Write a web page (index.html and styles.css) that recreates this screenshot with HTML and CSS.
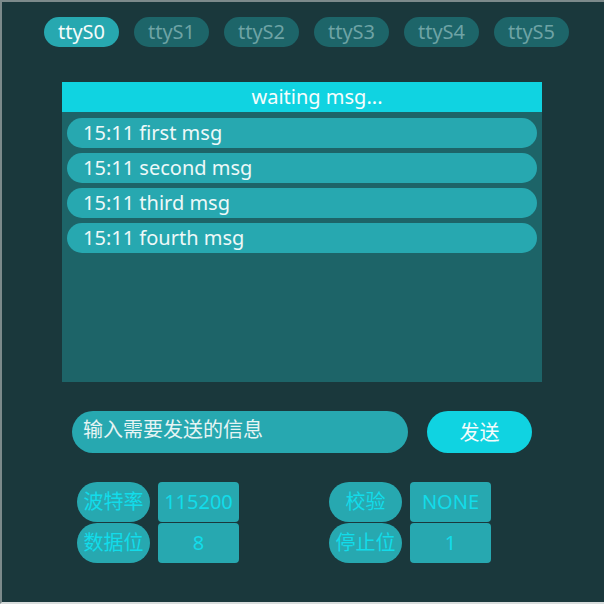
FILE: index.html
```html
<!DOCTYPE html>
<html lang="zh">
<head>
<meta charset="utf-8">
<title>Serial</title>
<link rel="stylesheet" href="styles.css">
</head>
<body>
<div class="screen">
  <div class="tabs">
    <div class="tab active">ttyS0</div>
    <div class="tab">ttyS1</div>
    <div class="tab">ttyS2</div>
    <div class="tab">ttyS3</div>
    <div class="tab">ttyS4</div>
    <div class="tab">ttyS5</div>
  </div>
  <div class="panel">
    <div class="panel-head">waiting msg...</div>
    <div class="msgs">
      <div class="msg">15:11 first msg</div>
      <div class="msg">15:11 second msg</div>
      <div class="msg">15:11 third msg</div>
      <div class="msg">15:11 fourth msg</div>
    </div>
  </div>
  <div class="send-row">
    <div class="input">输入需要发送的信息</div>
    <div class="send">发送</div>
  </div>
  <div class="settings">
    <div class="group">
      <div class="row"><div class="label">波特率</div><div class="value">115200</div></div>
      <div class="row"><div class="label">数据位</div><div class="value">8</div></div>
    </div>
    <div class="group">
      <div class="row"><div class="label">校验</div><div class="value">NONE</div></div>
      <div class="row"><div class="label">停止位</div><div class="value">1</div></div>
    </div>
  </div>
</div>
</body>
</html>
```
FILE: styles.css
```css
* { box-sizing: border-box; }
html, body { margin: 0; padding: 0; background: #ffffff; }
body {
  font-family: "Noto Sans", "Noto Sans CJK SC", sans-serif;
  font-size: 20px;
}
.screen {
  width: 604px;
  height: 604px;
  background: #1a383c;
  border-top: 2px solid #7c8a8b;
  border-left: 2px solid #7c8a8b;
  border-bottom: 2px solid #d8dcdc;
  padding-top: 15px;
  overflow: hidden;
}
.tabs {
  display: flex;
  gap: 15px;
  margin-left: 42px;
}
.tab {
  width: 75px;
  height: 30px;
  line-height: 30px;
  border-radius: 15px;
  background: #1d6569;
  color: #6ea3a5;
  text-align: center;
}
.tab.active {
  background: #27a8b0;
  color: #f4fbfb;
}
.panel {
  margin-top: 35px;
  margin-left: 60px;
  width: 480px;
  height: 300px;
  background: #1d6468;
}
.panel-head {
  height: 30px;
  line-height: 30px;
  background: #10d3e1;
  color: #f6fdfd;
  text-align: center;
  padding-left: 30px;
}
.msgs {
  display: flex;
  flex-direction: column;
  gap: 5px;
  padding: 6px 5px 0;
}
.msg {
  height: 30px;
  line-height: 30px;
  border-radius: 15px;
  background: #27a8b0;
  color: #eef8f8;
  padding-left: 16px;
}
.send-row {
  display: flex;
  gap: 19px;
  margin-top: 29px;
  margin-left: 70px;
}
.input {
  width: 336px;
  height: 42px;
  border-radius: 21px;
  background: #27a8b0;
  color: #e6f4f4;
  padding-left: 11px;
  line-height: 38px;
}
.send {
  width: 105px;
  height: 42px;
  border-radius: 21px;
  background: #10d3e1;
  color: #f4fcfc;
  text-align: center;
  line-height: 44px;
}
.settings {
  display: flex;
  gap: 90px;
  margin-top: 29px;
  margin-left: 75px;
}
.group {
  display: flex;
  flex-direction: column;
  gap: 1px;
}
.row {
  display: flex;
  gap: 8px;
}
.label {
  width: 73px;
  height: 40px;
  line-height: 40px;
  border-radius: 20px;
  background: #27a8b0;
  color: #12dcea;
  text-align: center;
}
.value {
  width: 81px;
  height: 40px;
  line-height: 40px;
  border-radius: 4px;
  background: #27a8b0;
  color: #12dcea;
  text-align: center;
}
```
